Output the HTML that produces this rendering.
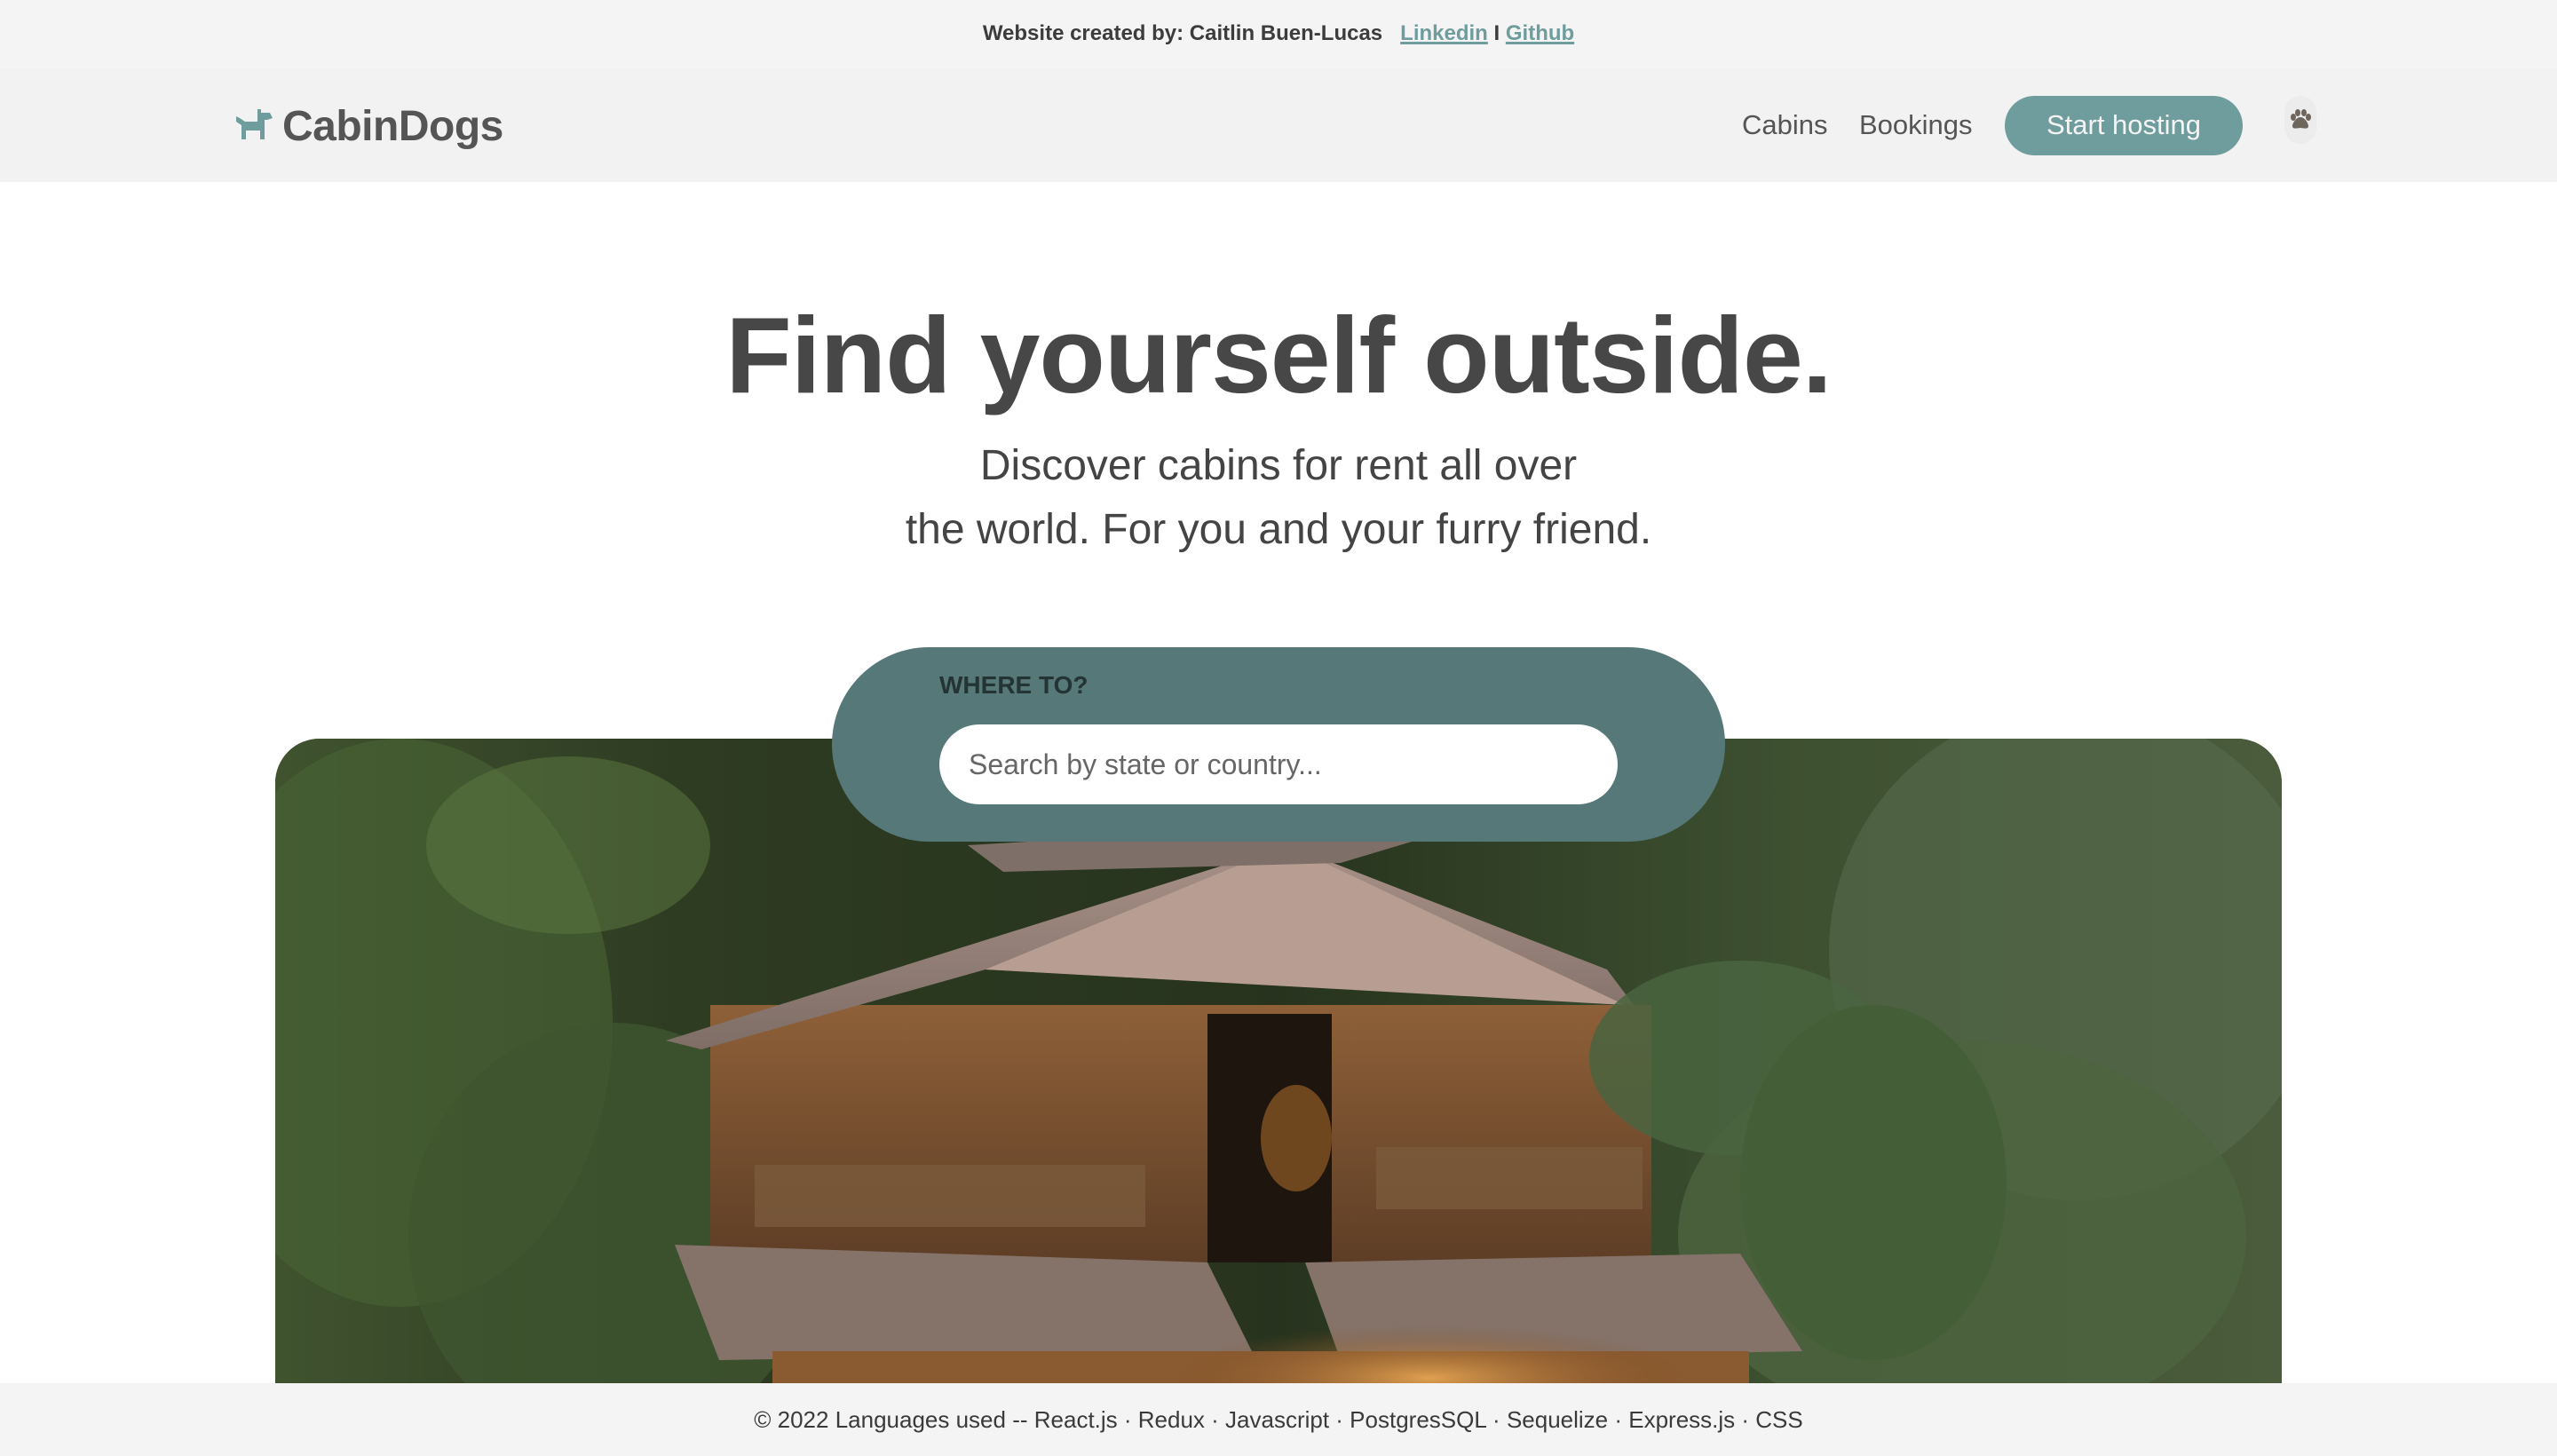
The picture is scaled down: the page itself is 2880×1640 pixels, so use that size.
<!DOCTYPE html>
<html><head><meta charset="utf-8"><style>
*{margin:0;padding:0;box-sizing:border-box}
html,body{width:2880px;height:1640px;overflow:hidden;background:#fff;font-family:"Liberation Sans",Arial,sans-serif}
.top{position:absolute;left:0;top:0;width:2880px;height:78px;background:#f4f4f4;text-align:center;font-size:24px;font-weight:bold;color:#3c3c3c;line-height:76px}
.top a{color:#6f9c9d;text-decoration:underline;text-decoration-thickness:3px}
.nav{position:absolute;left:0;top:78px;width:2880px;height:127px;background:#f2f2f2}
.logo{position:absolute;left:262px;top:34px;height:60px;display:flex;align-items:center}
.logo span{font-size:48px;font-weight:bold;color:#555;margin-left:10px;letter-spacing:-0.5px}
.link{position:absolute;top:63px;font-size:31px;color:#555;transform:translateY(-50%)}
.btn{position:absolute;left:2258px;top:30px;width:268px;height:67px;border-radius:34px;background:#6f9c9d;color:#f4f4f4;font-size:31px;text-align:center;line-height:66px}
.paw{position:absolute;left:2573px;top:30px;width:36px;height:54px;border-radius:18px;background:#ececec}
h1{position:absolute;left:0;top:330px;width:2880px;text-align:center;font-size:122px;font-weight:bold;color:#474747;letter-spacing:-1px}
.sub{position:absolute;left:0;top:489px;width:2880px;text-align:center;font-size:48px;line-height:72px;color:#444}
.img{position:absolute;left:310px;top:832px;width:2260px;height:726px;border-radius:50px 50px 0 0;overflow:hidden;background:#34452b}
.search{position:absolute;left:937px;top:729px;width:1006px;height:219px;border-radius:110px;background:#567879}
.where{position:absolute;left:121px;top:27px;font-size:28px;font-weight:bold;color:#243333}
.input{position:absolute;left:121px;top:87px;width:764px;height:90px;border-radius:45px;background:#fff;font-size:32px;color:#666;line-height:90px;padding-left:33px}
.foot{position:absolute;left:0;top:1558px;width:2880px;height:82px;background:#f4f4f4;text-align:center;font-size:26px;line-height:82px;color:#3a3a3a}
</style></head><body>
<div class="top">Website created by: Caitlin Buen-Lucas &nbsp; <a>Linkedin</a> I <a>Github</a></div>
<div class="nav">
 <div class="logo"><svg width="46" height="46" viewBox="0 0 46 46"><path d="M28 4l4 0 0 4 10 0 3 6-6 2-3 0 0 22-5 0 0-10-16 0 0 10-5 0 0-16-6-4 0-6 4 2 6 4 14 0 0-10z" fill="#6f9c9d"/></svg><span>CabinDogs</span></div>
 <div class="link" style="left:1962px">Cabins</div>
 <div class="link" style="left:2094px">Bookings</div>
 <div class="btn">Start hosting</div>
 <div class="paw"><svg width="36" height="54" viewBox="0 0 36 54"><g fill="#6e665c"><ellipse cx="10" cy="24" rx="3" ry="4"/><ellipse cx="15" cy="19" rx="3" ry="4"/><ellipse cx="22" cy="19" rx="3" ry="4"/><ellipse cx="27" cy="24" rx="3" ry="4"/><path d="M18 24c-5 0-9 7-9 10s3 3 9 2c6 1 9 1 9-2s-4-10-9-10z"/></g></svg></div>
</div>
<h1>Find yourself outside.</h1>
<div class="sub">Discover cabins for rent all over<br>the world. For you and your furry friend.</div>
<div class="img"><svg width="2260" height="726" viewBox="0 0 2260 726">
<defs>
<linearGradient id="g1" x1="0" y1="0" x2="1" y2="0"><stop offset="0" stop-color="#40532f"/><stop offset=".2" stop-color="#2e3c22"/><stop offset=".5" stop-color="#27331e"/><stop offset=".75" stop-color="#3d5030"/><stop offset="1" stop-color="#4a5c3c"/></linearGradient>
<linearGradient id="roof" x1="0" y1="0" x2="0" y2="1"><stop offset="0" stop-color="#a89088"/><stop offset="1" stop-color="#7e6e66"/></linearGradient>
<linearGradient id="wall" x1="0" y1="0" x2="0" y2="1"><stop offset="0" stop-color="#8e6038"/><stop offset="1" stop-color="#5e3e26"/></linearGradient>
<radialGradient id="glow"><stop offset="0" stop-color="#e0a050"/><stop offset="1" stop-color="#7a4a22" stop-opacity="0"/></radialGradient>
</defs>
<rect width="2260" height="726" fill="url(#g1)"/>
<ellipse cx="140" cy="320" rx="240" ry="320" fill="#4a6436" opacity=".6"/>
<ellipse cx="330" cy="120" rx="160" ry="100" fill="#5e7a42" opacity=".5"/>
<ellipse cx="380" cy="560" rx="230" ry="240" fill="#3e5530" opacity=".8"/>
<ellipse cx="2030" cy="240" rx="280" ry="280" fill="#5a6e50" opacity=".55"/>
<ellipse cx="1900" cy="560" rx="320" ry="220" fill="#4e6440" opacity=".8"/>
<rect x="490" y="300" width="1060" height="290" fill="url(#wall)"/>
<rect x="1050" y="310" width="140" height="280" fill="#1e150e"/>
<ellipse cx="1150" cy="450" rx="40" ry="60" fill="#c07a30" opacity=".5"/>
<rect x="540" y="480" width="440" height="70" fill="#7a5a3c" opacity=".8"/>
<rect x="1240" y="460" width="300" height="70" fill="#7a5a3c" opacity=".8"/>
<path d="M1140 120 L440 340 L480 350 L800 260 L1530 300 L1500 260 Z" fill="url(#roof)"/>
<path d="M800 260 L1140 120 L1520 300 Z" fill="#b89e92"/>
<path d="M780 120 L1120 100 L1300 110 L1200 140 L820 150Z" fill="#7e7068"/>
<path d="M450 570 L1050 590 L1100 690 L500 700Z" fill="#85736a"/>
<path d="M1160 590 L1650 580 L1720 690 L1200 700Z" fill="#85736a"/>
<rect x="560" y="690" width="1100" height="36" fill="#8a5a30"/>
<ellipse cx="1300" cy="720" rx="300" ry="60" fill="url(#glow)"/>
<ellipse cx="1650" cy="360" rx="170" ry="110" fill="#4a6440" opacity=".85"/>
<ellipse cx="1800" cy="500" rx="150" ry="200" fill="#445e36" opacity=".9"/>
</svg></div>
<div class="search"><div class="where">WHERE TO?</div><div class="input">Search by state or country...</div></div>
<div class="foot">© 2022 Languages used -- React.js · Redux · Javascript · PostgresSQL · Sequelize · Express.js · CSS</div>
</body></html>
